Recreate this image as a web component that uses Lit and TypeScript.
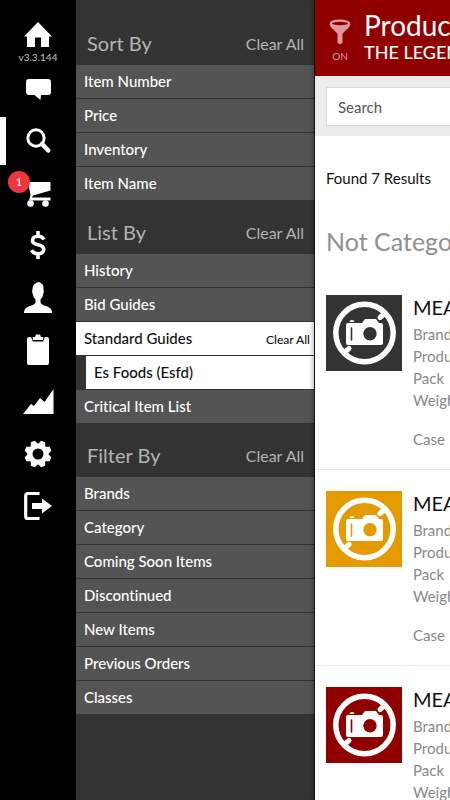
import { LitElement, html, css, svg } from "lit";
import { customElement, property } from "lit/decorators.js";

const icons = {
  home: svg`<path d="M16 3L30 17.5H27V28H19V18.5H13V28H5V17.5H2Z"/>`,
  messages: svg`<path d="M7 6H26a3 3 0 0 1 3 3V19a3 3 0 0 1-3 3H19L18.500 27L12.500 22H7a3 3 0 0 1-3-3V9a3 3 0 0 1 3-3Z"/>`,
  search: svg`<g fill="none" stroke="currentColor"><circle cx="14" cy="13" r="8.200" stroke-width="3"/><path d="M20 19L26.300 25.500" stroke-width="4.500" stroke-linecap="round"/></g>`,
  cart: svg`<path d="M6 5H28.500V13.500L11 18.500L10 20.500H28.500V23.500H7L8.500 18Z"/><circle cx="8.500" cy="26.500" r="3.300"/><circle cx="23.500" cy="26.500" r="3.300"/>`,
  prices: svg`<path d="M22 10.500C20.800 8.300 18.800 7.200 16 7.200C12.500 7.200 10.500 9 10.500 11.400C10.500 17.500 21.800 14 21.800 20.300C21.800 23 19.500 24.800 16 24.800C13 24.800 10.800 23.600 9.500 21.200M16 2V7M16 25V30" fill="none" stroke="currentColor" stroke-width="3.600"/>`,
  account: svg`<path d="M2 32C2 28 4 26.500 8 25C11.500 23.800 13.500 23 13.500 21V18.500C11.500 16.500 11 14.500 10.700 12.500C10 11.500 10 10 10.500 8.500C10.500 4 13 1.500 17.500 1C17.800 2 20.500 2 21.300 5C21.600 6.500 21.500 7.500 21.500 8.500C22 10 22 11.500 21.300 12.500C21 14.500 20.500 16.500 18.500 18.500V21C18.500 23 20.500 23.800 24 25C28 26.500 30 28 30 32Z"/>`,
  orders: svg`<path d="M7 4H9L11 8.500H21L23 4H25a2 2 0 0 1 2 2V30a2 2 0 0 1-2 2H7a2 2 0 0 1-2-2V6a2 2 0 0 1 2-2Z"/><path d="M11 7L10.500 4H13L14 1.500H18L19 4H21.500L21 7Z"/>`,
  reports: svg`<path d="M1 29L9 19L12 21L18 13L22.500 17L31.500 4V29Z"/>`,
  settings: svg`<circle cx="16" cy="17" r="8" fill="none" stroke="currentColor" stroke-width="5"/>${[0, 1, 2, 3, 4, 5, 6, 7].map(
    (n) => svg`<path d="M12 8L13.800 3.500H18.200L20 8Z" transform="rotate(${22.5 + n * 45} 16 17)"/>`
  )}`,
  logout: svg`<path d="M17.500 4.500H6Q3.700 4.500 3.700 6.800V27.200Q3.700 29.500 6 29.500H17.500" fill="none" stroke="currentColor" stroke-width="3.200"/><path d="M10 14H20V9.500L30 17L20 24.500V20H10Z"/>`,
};

type IconName = keyof typeof icons;

const links: { icon: IconName; label: string; active?: boolean; count?: number }[] = [
  { icon: "messages", label: "Messages" },
  { icon: "search", label: "Search", active: true },
  { icon: "cart", label: "Cart", count: 1 },
  { icon: "prices", label: "Prices" },
  { icon: "account", label: "Account" },
  { icon: "orders", label: "Orders" },
  { icon: "reports", label: "Reports" },
  { icon: "settings", label: "Settings" },
  { icon: "logout", label: "Log out" },
];

const drawIcon = (name: IconName) =>
  html`<svg class="icon" viewBox="0 0 32 32" fill="currentColor" aria-hidden="true">${icons[name]}</svg>`;

@customElement("nav-rail")
class NavRail extends LitElement {
  static styles = css`
    :host {
      display: block;
      flex: 0 0 76px;
      background: #000;
      color: #fff;
    }
    nav {
      display: flex;
      flex-direction: column;
      padding-top: 11px;
    }
    button {
      position: relative;
      display: flex;
      flex-direction: column;
      align-items: center;
      justify-content: center;
      height: 52px;
      padding: 0;
      border: 0;
      background: none;
      color: inherit;
      font: inherit;
    }
    .home {
      padding-top: 8px;
    }
    .icon {
      flex: none;
      width: 32px;
      height: 32px;
    }
    .version {
      font-size: 10px;
      line-height: 12px;
      color: #c4c4c4;
    }
    .active::before {
      content: "";
      position: absolute;
      left: 0;
      top: 2px;
      bottom: 2px;
      width: 6px;
      background: #fff;
    }
    .badge {
      position: absolute;
      left: 8px;
      top: 4px;
      width: 22px;
      height: 22px;
      border-radius: 50%;
      background: #f0353f;
      font-size: 11px;
      line-height: 22px;
      text-align: center;
    }
  `;

  render() {
    return html`<nav>
      <button class="home" aria-label="Home">${drawIcon("home")}<span class="version">v3.3.144</span></button>
      ${links.map(
        (l) => html`<button class=${l.active ? "active" : ""} aria-label=${l.label}>
          ${drawIcon(l.icon)}${l.count ? html`<span class="badge">${l.count}</span>` : ""}
        </button>`
      )}
    </nav>`;
  }
}

interface Option {
  label: string;
  children?: string[];
}

const groups: { title: string; options: Option[] }[] = [
  { title: "Sort By", options: ["Item Number", "Price", "Inventory", "Item Name"].map((label) => ({ label })) },
  {
    title: "List By",
    options: [
      { label: "History" },
      { label: "Bid Guides" },
      { label: "Standard Guides", children: ["Es Foods (Esfd)"] },
      { label: "Critical Item List" },
    ],
  },
  {
    title: "Filter By",
    options: [
      "Brands",
      "Category",
      "Coming Soon Items",
      "Discontinued",
      "New Items",
      "Previous Orders",
      "Classes",
    ].map((label) => ({ label })),
  },
];

@customElement("filter-panel")
class FilterPanel extends LitElement {
  static styles = css`
    :host {
      display: block;
      flex: 0 0 239px;
      box-sizing: border-box;
      padding-top: 11px;
      background: #333331;
    }
    header {
      display: flex;
      align-items: center;
      justify-content: space-between;
      box-sizing: border-box;
      height: 54px;
      padding: 10px 11px 0;
    }
    h2 {
      margin: 0;
      font-size: 20px;
      line-height: 26px;
      font-weight: 400;
      color: #b4b4b4;
    }
    button {
      padding: 0;
      border: 0;
      background: none;
      color: inherit;
      font: inherit;
      text-align: left;
    }
    .clear {
      color: #b4b4b4;
      font-size: 16px;
    }
    ul {
      display: flex;
      flex-direction: column;
      gap: 1px;
      margin: 0;
      padding: 0;
      list-style: none;
    }
    li {
      display: flex;
      align-items: baseline;
      box-sizing: border-box;
      height: 33px;
      padding: 0 5px 0 8px;
      background: #545454;
      color: #fff;
      font-size: 15px;
      font-weight: 500;
      line-height: 32px;
    }
    .option {
      flex: 1;
    }
    .open,
    .child {
      background: #fff;
      color: #111;
    }
    .child {
      margin-left: 10px;
    }
    .small {
      font-size: 12px;
    }
  `;

  render() {
    return groups.map(
      (g) => html`<section>
        <header>
          <h2>${g.title}</h2>
          <button class="clear">Clear All</button>
        </header>
        <ul>
          ${g.options.map(
            (o) => html`<li class=${o.children ? "open" : ""}>
                <button class="option">${o.label}</button>
                ${o.children ? html`<button class="small">Clear All</button>` : ""}
              </li>
              ${o.children?.map((c) => html`<li class="child"><button class="option">${c}</button></li>`)}`
          )}
        </ul>
      </section>`
    );
  }
}

@customElement("product-card")
class ProductCard extends LitElement {
  @property() tone = "dark";

  static styles = css`
    :host {
      display: block;
      border-bottom: 1px solid #e8e8e8;
    }
    article {
      display: flex;
      gap: 11px;
      padding: 21px 11px 19px;
    }
    .thumb {
      flex: none;
      width: 76px;
      height: 76px;
      color: #333;
    }
    .amber {
      color: #e59a00;
    }
    .red {
      color: #900000;
    }
    h4 {
      margin: 0 0 3px;
      font-size: 20px;
      line-height: 25px;
      font-weight: 400;
      color: #111;
    }
    p {
      margin: 0;
      font-size: 15px;
      line-height: 22px;
      color: #888;
    }
    .unit {
      margin-top: 17px;
    }
    .info {
      white-space: nowrap;
    }
  `;

  render() {
    return html`<article>
      <svg class="thumb ${this.tone}" viewBox="0 0 76 76" role="img" aria-label="No photo">
        <rect width="76" height="76" fill="currentColor" />
        <circle cx="38.500" cy="38" r="28.700" fill="none" stroke="#fff" stroke-width="5.500" />
        <path d="M58 19L54 22.500M19 57L23 53.500" stroke="#fff" stroke-width="5" stroke-linecap="round" />
        <path
          fill="#fff"
          d="M22 28H36L39 24H50L53 28H55Q57 28 57 30V48Q57 50 55 50H22Q20 50 20 48V30Q20 28 22 28ZM23.500 27Q23.500 25 26 25T28.500 27Z"
        />
        <path d="M25.500 33V45" stroke="currentColor" stroke-width="1.600" stroke-linecap="round" />
        <circle cx="44" cy="38.700" r="6.700" fill="currentColor" />
      </svg>
      <div class="info">
        <h4>MEAT</h4>
        <p>Brand:</p>
        <p>Product:</p>
        <p>Pack</p>
        <p>Weight:</p>
        <p class="unit">Case</p>
      </div>
    </article>`;
  }
}

@customElement("product-page")
class ProductPage extends LitElement {
  static styles = css`
    :host {
      display: block;
      position: relative;
      flex: 0 0 100%;
      background: #fff;
      box-shadow: 0 0 0 1px #111, 0 0 6px 1px rgba(0, 0, 0, 0.4);
    }
    .title {
      display: flex;
      gap: 10px;
      height: 76px;
      box-sizing: border-box;
      padding: 9px 10px 0 11px;
      background: #900000;
      color: #fff;
      white-space: nowrap;
    }
    .toggle {
      display: flex;
      flex-direction: column;
      align-items: center;
      align-self: flex-start;
      width: 28px;
      padding: 9px 0 0;
      border: 0;
      background: none;
      color: #d99;
      font: inherit;
      font-size: 10px;
      line-height: 12px;
      gap: 5px;
    }
    .funnel {
      width: 24px;
      height: 27px;
    }
    h1 {
      margin: 0;
      font-size: 28px;
      line-height: 32px;
      font-weight: 400;
    }
    .sub {
      margin: 0;
      font-size: 18px;
      font-weight: 500;
      line-height: 22px;
    }
    .searchbar {
      padding: 11px 11px 10px;
      background: #ebedea;
    }
    input {
      display: block;
      box-sizing: border-box;
      width: 100%;
      height: 39px;
      padding: 0 11px;
      border: 1px solid #d8d8d8;
      background: #fff;
      font: inherit;
      font-size: 15px;
    }
    input::placeholder {
      color: #555;
      opacity: 1;
    }
    .found {
      margin: 0;
      padding: 32px 11px 0;
      font-size: 15px;
      line-height: 20px;
      color: #111;
    }
    h3 {
      margin: 0;
      padding: 37px 11px 17px;
      font-size: 25px;
      line-height: 32px;
      font-weight: 400;
      color: #909090;
      white-space: nowrap;
    }
  `;

  render() {
    return html`<header class="title">
        <button class="toggle">
          <svg class="funnel" viewBox="0 0 24 27" aria-hidden="true">
            <path d="M1.500 6C2 10 6 11 9.500 16V25Q12 27 14.500 25V16C18 11 22 10 22.500 6Z" fill="currentColor" />
            <ellipse cx="12" cy="5.500" rx="9.200" ry="2.800" fill="#900000" stroke="currentColor" stroke-width="2.200" />
          </svg>
          ON
        </button>
        <div>
          <h1>Products</h1>
          <p class="sub">THE LEGEND</p>
        </div>
      </header>
      <div class="searchbar"><input type="search" placeholder="Search" aria-label="Search" /></div>
      <p class="found">Found 7 Results</p>
      <h3>Not Categorized</h3>
      ${["dark", "amber", "red"].map((tone) => html`<product-card .tone=${tone}></product-card>`)}`;
  }
}

@customElement("app-root")
class AppRoot extends LitElement {
  static styles = css`
    :host {
      display: flex;
      height: 100vh;
      overflow: hidden;
      font-family: Lato, "Liberation Sans", sans-serif;
      font-variant-ligatures: none;
    }
  `;

  render() {
    return html`<nav-rail></nav-rail><filter-panel></filter-panel><product-page></product-page>`;
  }
}
